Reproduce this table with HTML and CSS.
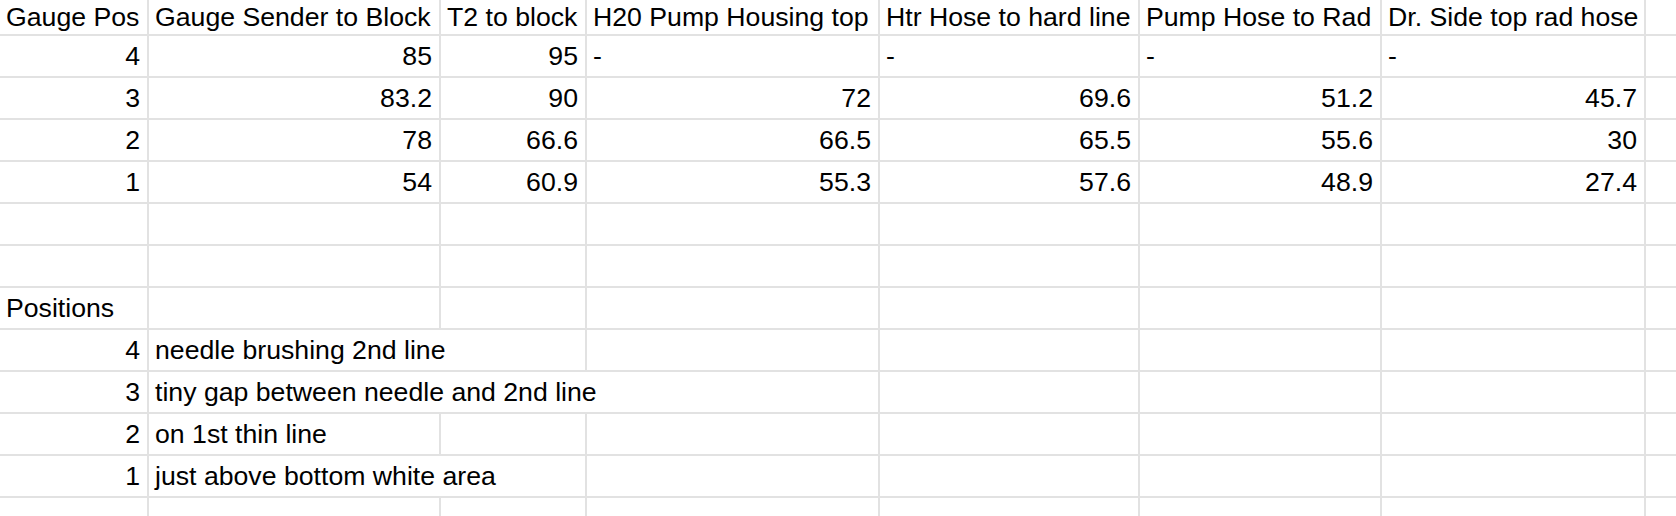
FILE: index.html
```html
<!DOCTYPE html>
<html>
<head>
<meta charset="utf-8">
<link rel="stylesheet" href="styles.css">
</head>
<body>
<div class="sheet">
  <div class="c">Gauge Pos</div><div class="c">Gauge Sender to Block</div><div class="c">T2 to block</div><div class="c">H20 Pump Housing top</div><div class="c">Htr Hose to hard line</div><div class="c">Pump Hose to Rad</div><div class="c">Dr. Side top rad hose</div><div class="c"></div>

  <div class="c r">4</div><div class="c r">85</div><div class="c r">95</div><div class="c">-</div><div class="c">-</div><div class="c">-</div><div class="c">-</div><div class="c"></div>

  <div class="c r">3</div><div class="c r">83.2</div><div class="c r">90</div><div class="c r">72</div><div class="c r">69.6</div><div class="c r">51.2</div><div class="c r">45.7</div><div class="c"></div>

  <div class="c r">2</div><div class="c r">78</div><div class="c r">66.6</div><div class="c r">66.5</div><div class="c r">65.5</div><div class="c r">55.6</div><div class="c r">30</div><div class="c"></div>

  <div class="c r">1</div><div class="c r">54</div><div class="c r">60.9</div><div class="c r">55.3</div><div class="c r">57.6</div><div class="c r">48.9</div><div class="c r">27.4</div><div class="c"></div>

  <div class="c"></div><div class="c"></div><div class="c"></div><div class="c"></div><div class="c"></div><div class="c"></div><div class="c"></div><div class="c"></div>

  <div class="c"></div><div class="c"></div><div class="c"></div><div class="c"></div><div class="c"></div><div class="c"></div><div class="c"></div><div class="c"></div>

  <div class="c">Positions</div><div class="c"></div><div class="c"></div><div class="c"></div><div class="c"></div><div class="c"></div><div class="c"></div><div class="c"></div>

  <div class="c r">4</div><div class="c s2">needle brushing 2nd line</div><div class="c"></div><div class="c"></div><div class="c"></div><div class="c"></div><div class="c"></div>

  <div class="c r">3</div><div class="c s3">tiny gap between needle and 2nd line</div><div class="c"></div><div class="c"></div><div class="c"></div><div class="c"></div>

  <div class="c r">2</div><div class="c">on 1st thin line</div><div class="c"></div><div class="c"></div><div class="c"></div><div class="c"></div><div class="c"></div><div class="c"></div>

  <div class="c r">1</div><div class="c s2">just above bottom white area</div><div class="c"></div><div class="c"></div><div class="c"></div><div class="c"></div><div class="c"></div>

  <div class="c"></div><div class="c"></div><div class="c"></div><div class="c"></div><div class="c"></div><div class="c"></div><div class="c"></div><div class="c"></div>

  <div class="c"></div><div class="c"></div><div class="c"></div><div class="c"></div><div class="c"></div><div class="c"></div><div class="c"></div><div class="c"></div>
</div>
</body>
</html>
```

FILE: styles.css
```css
html, body {
  margin: 0;
  padding: 0;
  background: #ffffff;
  overflow: hidden;
}

.sheet {
  display: grid;
  grid-template-columns: 147px 290px 144px 291px 258px 240px 262px 1fr;
  grid-template-rows: 34px;
  grid-auto-rows: 40px;
  gap: 2px;
  background: #e2e2e2;
  width: 100vw;
  font-family: "Liberation Sans", Arial, sans-serif;
  font-size: 26.67px;
  color: #000000;
}

.c {
  background: #ffffff;
  display: flex;
  align-items: center;
  padding: 0 6px;
  white-space: nowrap;
  overflow: hidden;
  min-width: 0;
}

.r {
  justify-content: flex-end;
  padding-right: 7px;
}

.s2 {
  grid-column: span 2;
}

.s3 {
  grid-column: span 3;
}
```
